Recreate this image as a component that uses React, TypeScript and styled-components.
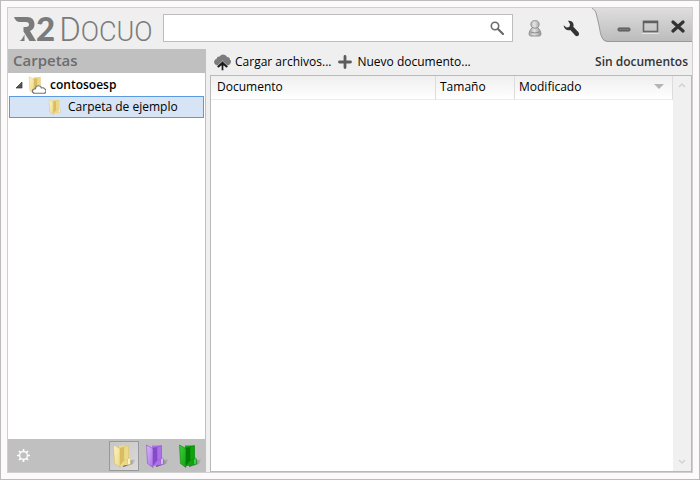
import React, { useState } from "react";
import styled, { createGlobalStyle } from "styled-components";

const GlobalStyle = createGlobalStyle`
  * { box-sizing: border-box; }
  body {
    margin: 0;
    font-family: "Open Sans", "Noto Sans", sans-serif;
    font-size: 12px;
    line-height: 16px;
    color: #000;
  }
  button, input { font: inherit; color: inherit; }
  button { border: 0; padding: 0; background: none; cursor: pointer; }
  svg { display: block; flex: none; }
`;

const Page = styled.div`
  min-height: 100vh;
  display: flex;
  padding: 6px;
  background: #fcfafb;
  border: 1px solid #bcbcbc;
`;

const Window = styled.div`
  flex: 1;
  min-width: 0;
  display: flex;
  flex-direction: column;
  background: #efefef;
  border: 1px solid #cfcfcf;
`;

const Header = styled.header`
  display: flex;
  align-items: flex-start;
  height: 41px;
`;

const Brand = styled.h1`
  display: flex;
  align-items: baseline;
  width: 155px;
  margin: 0;
  padding-left: 6px;
  flex: none;
  font-family: Roboto, sans-serif;
  line-height: 40px;
  white-space: nowrap;
  color: #7b7b7b;
`;

const Two = styled.span`
  font-family: Lato, sans-serif;
  font-size: 33px;
  font-weight: 900;
`;

const Initial = styled.span`
  margin-left: 4px;
  font-size: 33px;
  font-weight: 300;
`;

const SmallCaps = styled.span`
  font-size: 27px;
  font-weight: 300;
`;

const SearchBox = styled.label`
  flex: 1;
  min-width: 0;
  height: 28px;
  margin-top: 6px;
  padding-right: 8px;
  display: flex;
  align-items: center;
  background: #fff;
  border: 1px solid #bdbdbd;
`;

const SearchInput = styled.input`
  flex: 1;
  min-width: 0;
  height: 24px;
  padding: 0 6px;
  border: 0;
  outline: 0;
  background: transparent;
`;

const HeaderTools = styled.div`
  display: flex;
  align-items: center;
  gap: 18px;
  height: 40px;
  padding: 0 12px 0 13px;
`;

const IconButton = styled.button`
  display: flex;
  align-items: center;
  justify-content: center;
  width: 18px;
  height: 20px;
`;

const WindowControls = styled.div`
  display: flex;
  height: 34px;
`;

const ControlStrip = styled.div`
  display: flex;
  align-items: center;
  gap: 9px;
  padding: 3px 5px 0 4px;
  background: linear-gradient(#dedede, #bcbcbc);
  border-bottom: 1px solid #999;
`;

const Body = styled.div`
  flex: 1;
  min-height: 0;
  display: flex;
`;

const Sidebar = styled.aside`
  width: 198px;
  flex: none;
  display: flex;
  flex-direction: column;
  background: #fff;
  border-right: 1px solid #c0c0c0;
`;

const SidebarTitle = styled.h2`
  margin: 0;
  height: 24px;
  padding-left: 5px;
  font-size: 15px;
  line-height: 23px;
  font-weight: 600;
  color: #6c6c6c;
  background: #c0c0c0;
`;

const Tree = styled.ul`
  flex: 1;
  margin: 0;
  padding: 1px;
  list-style: none;
`;

const TreeRow = styled.button<{ $depth: number; $selected?: boolean }>`
  display: flex;
  align-items: center;
  gap: 4px;
  width: 100%;
  height: 22px;
  padding-left: ${(p) => (p.$depth ? 38 : 4)}px;
  text-align: left;
  font-weight: ${(p) => (p.$depth ? 400 : 600)};
  background: ${(p) => (p.$selected ? "#d7e4f6" : "transparent")};
  border: 1px solid ${(p) => (p.$selected ? "#5b9ae0" : "transparent")};
`;

const SidebarFooter = styled.footer`
  display: flex;
  align-items: center;
  justify-content: space-between;
  height: 33px;
  padding: 0 0 0 6px;
  background: #c0c0c0;
`;

const FolderTabs = styled.div`
  display: flex;
  gap: 3px;
`;

const FolderTab = styled.button<{ $active: boolean }>`
  display: flex;
  align-items: center;
  justify-content: center;
  width: 30px;
  height: 30px;
  background: ${(p) => (p.$active ? "linear-gradient(135deg, #c6c6c6, #dadada)" : "none")};
  border: 1px solid ${(p) => (p.$active ? "#989898" : "transparent")};
`;

const Main = styled.main`
  flex: 1;
  min-width: 0;
  display: flex;
  flex-direction: column;
  padding-left: 4px;
`;

const Toolbar = styled.div`
  display: flex;
  align-items: center;
  gap: 6px;
  height: 26px;
  padding: 0 4px;
`;

const Action = styled.button`
  display: flex;
  align-items: center;
  gap: 4px;
  height: 22px;
  white-space: nowrap;
`;

const Status = styled.span`
  margin-left: auto;
  font-weight: 600;
  color: #333;
  white-space: nowrap;
`;

const ListBox = styled.section`
  flex: 1;
  display: flex;
  background: #fff;
  border: 1px solid #b9b9b9;
`;

const ListArea = styled.div`
  flex: 1;
  min-width: 0;
`;

const Table = styled.table`
  width: 100%;
  table-layout: fixed;
  border-collapse: separate;
  border-spacing: 0;
`;

const HeadCell = styled.th<{ $width?: number }>`
  width: ${(p) => (p.$width ? `${p.$width}px` : "auto")};
  height: 24px;
  padding: 0 8px 2px 4px;
  text-align: left;
  font-weight: 400;
  background: linear-gradient(#efefef, #fff);
  border-bottom: 1px solid #ebebeb;
  border-right: 1px solid #dcdcdc;
  &:first-child { padding-left: 6px; }
`;

const HeadLabel = styled.span`
  display: flex;
  align-items: center;
  justify-content: space-between;
`;

const ScrollTrack = styled.div`
  width: 18px;
  display: flex;
  flex-direction: column;
  align-items: center;
  justify-content: space-between;
  background: #f0f0f0;
`;

const RMark = () => (
  <svg width="22" height="24" viewBox="0 0 22 24" fill="#7b7b7b" aria-hidden="true">
    <path d="M0 0h13c5 0 7.500 3 7.500 7.500 0 3.500-2 5.500-4.500 6.500L22 24h-6.500L9.500 14.500V10H12c2 0 3-1 3-2.500S14 5 12 5H6C3 5 1 3 0 0z" />
    <path d="M10.500 17.500V24H5.500c2.500-1 3.500-4 5-6.500z" />
  </svg>
);

const SearchIcon = () => (
  <svg width="14" height="14" viewBox="0 0 14 14" fill="none" stroke="#6a6a6a">
    <circle cx="5" cy="5" r="3.700" strokeWidth="1.600" />
    <path d="M8 8l5 5" strokeWidth="2.200" strokeLinecap="round" />
  </svg>
);

const PawnIcon = () => (
  <svg width="14" height="17" viewBox="0 0 14 17">
    <defs>
      <linearGradient id="pawn" x1="0" x2="1">
        <stop offset="0" stopColor="#a4a4a4" />
        <stop offset=".45" stopColor="#e4e4e4" />
        <stop offset="1" stopColor="#929292" />
      </linearGradient>
    </defs>
    <path
      d="M5 .8h4q2.200 1 2.200 3.500 0 2-1.500 3.200 2.800 2.500 3.300 6 0 2.500-2 2.500H3q-2 0-2-2.500.5-3.500 3.300-6Q2.800 6.300 2.800 4.300 2.800 1.800 5 .8z"
      fill="url(#pawn)"
      stroke="#919191"
    />
    <path d="M4 7.500q3 1.500 6 0M2.500 12q4.500 2 9 0" fill="none" stroke="#8b8b8b" />
  </svg>
);

const WrenchIcon = () => (
  <svg width="17" height="17" viewBox="0 0 17 17">
    <path
      d="M5 .8q3.500-.5 5 2 1 2 .3 4l5.200 5.400q1.200 2 0 3.300-1.300 1.200-3 .2L7.300 10Q4.500 10.800 2.300 9 .6 7.500.6 5.300L3.500 7.500l2.800-.6.8-2.700z"
      fill="#333"
    />
  </svg>
);

const TabEdge = () => (
  <svg width="19" height="34" viewBox="0 0 19 34">
    <defs>
      <linearGradient id="edge" x1="0" y1="0" x2="0" y2="1">
        <stop offset="0" stopColor="#dedede" />
        <stop offset="1" stopColor="#bcbcbc" />
      </linearGradient>
    </defs>
    <path d="M0 0h19v34h-3C8 34 9 25 6 13 4 5 4 2 0 0z" fill="url(#edge)" />
    <path d="M0 .5C4 2 4 5 6 13c3 12 2 20.500 11 20.500h2" fill="none" stroke="#999" />
  </svg>
);

const MinimizeIcon = () => (
  <svg width="14" height="16" viewBox="0 0 14 16">
    <rect x="1" y="10" width="12" height="3" rx="1" fill="#777" stroke="#555" />
  </svg>
);

const MaximizeIcon = () => (
  <svg width="18" height="16" viewBox="0 0 18 16" fill="none">
    <rect x="1.500" y="3.500" width="14" height="10" stroke="#666" strokeWidth="1.600" />
    <path d="M1 4h15" stroke="#606060" strokeWidth="2.500" />
    <path d="M0 15.500h17" stroke="#e4e4e4" />
  </svg>
);

const CloseIcon = () => (
  <svg width="14" height="16" viewBox="0 0 14 16">
    <path d="M2 4l10 9M12 4L2 13" stroke="#333" strokeWidth="3.200" strokeLinecap="round" />
  </svg>
);

const CloudUpIcon = () => (
  <svg width="17" height="17" viewBox="0 0 17 17">
    <path
      d="M3 11Q.5 10.500.5 8T3 5Q3 2.500 5.500 3 7 .5 9.500 1q2.500 0 3.500 2.500 2.500-.5 2.500 2 1.500 1 1 3-1 2.500-3 2.500z"
      fill="#7c7c7c"
      stroke="#6c6c6c"
      strokeWidth=".7"
    />
    <path
      d="M8.500 7L2.800 12.300l1.700 1.700L7.300 11.800V16.500h2.400v-4.700L12.500 14l1.700-1.700z"
      fill="#1b1b1b"
      stroke="#efefef"
      strokeWidth=".6"
    />
  </svg>
);

const PlusIcon = () => (
  <svg width="16" height="16" viewBox="0 0 16 16">
    <path d="M8 2.500v11M2.500 8h11" stroke="#5c5c5c" strokeWidth="2.800" strokeLinecap="round" />
  </svg>
);

const GearIcon = () => (
  <svg width="15" height="15" viewBox="0 0 15 15" fill="none" stroke="#fff">
    <circle cx="7.500" cy="7.500" r="3.900" strokeWidth="1.300" />
    <path
      d="M7.500 1v2.500M7.500 11.500V14M1 7.500h2.500M11.500 7.500H14M3 3l1.700 1.700M10.300 10.300L12 12M3 12l1.700-1.700M10.300 4.700L12 3"
      strokeWidth="1.700"
    />
  </svg>
);

const Expander = () => (
  <svg width="10" height="10" viewBox="0 0 10 10">
    <path d="M8 2v6H2z" fill="#555" stroke="#333" strokeWidth=".7" />
  </svg>
);

type Tone = { light: string; mid: string; dark: string };

const tones: Record<string, Tone> = {
  amarillo: { light: "#fdf3c4", mid: "#eed98a", dark: "#d3b558" },
  morado: { light: "#d9b8fa", mid: "#ac70ea", dark: "#7d42bd" },
  verde: { light: "#3fd03f", mid: "#0ca50c", dark: "#057005" },
};

const FolderArt = ({ name, size, cloud }: { name: string; size: number; cloud?: boolean }) => {
  const t = tones[name];
  const id = `${name}-${size}`;
  return (
    <svg width={size} height={size} viewBox="0 0 24 24">
      <defs>
        <linearGradient id={id} x1="0" x2="1" y1="0" y2="1">
          <stop offset="0" stopColor={t.light} />
          <stop offset="1" stopColor={t.mid} />
        </linearGradient>
        <linearGradient id={`${id}-shade`} x1="0" x2="1">
          <stop offset="0" stopColor="#333" stopOpacity=".8" />
          <stop offset="1" stopColor="#333" stopOpacity="0" />
        </linearGradient>
      </defs>
      {size > 20 && <path d="M12 18l12-3-3 5-10 3z" fill={`url(#${id}-shade)`} />}
      <path d="M7 1.500h9.500v19L8 22z" fill={t.mid} />
      <path d="M7 4l5-1v14l-4.500 5z" fill={t.dark} opacity=".8" />
      <path d="M12 3l4.500-1.500V15L12 17z" fill={t.mid} stroke={t.dark} strokeWidth=".4" />
      <path d="M1.500 1L8 4.500V23.500L2.500 19.500z" fill={`url(#${id})`} stroke={t.dark} strokeWidth=".5" />
      <path d="M8 22l4-5 4.500-1.500v5z" fill={t.mid} />
      <path d="M15.500 15q2-2 3 0v5l-3 1z" fill={t.light} stroke={t.dark} strokeWidth=".5" />
      {cloud && (
        <path
          d="M9 23q-3 0-3-3t4-3q0-4 4-4 3 0 4 3 3-1 4 1 2 1 2 3 0 3-3 3z"
          fill="#fff"
          stroke="#747474"
          strokeWidth="1.500"
        />
      )}
    </svg>
  );
};

const Chevron = ({ down }: { down?: boolean }) => (
  <svg width="10" height="8" viewBox="0 0 10 8" fill="none" stroke="#d2d2d2" strokeWidth="1.500">
    <path d={down ? "M2 3l3 3 3-3" : "M2 5l3-3 3 3"} />
  </svg>
);

const SortArrow = () => (
  <svg width="10" height="6" viewBox="0 0 10 6">
    <path d="M0 0h10L5 5z" fill="#b5b5b5" />
  </svg>
);

export default function App() {
  const [folderTab, setFolderTab] = useState("amarillo");
  return (
    <>
      <GlobalStyle />
      <Page>
        <Window>
          <Header>
            <Brand>
              <RMark />
              <Two>2</Two>
              <Initial>D</Initial>
              <SmallCaps>OCUO</SmallCaps>
            </Brand>
            <SearchBox>
              <SearchInput type="search" aria-label="Buscar" />
              <SearchIcon />
            </SearchBox>
            <HeaderTools>
              <IconButton aria-label="Usuario"><PawnIcon /></IconButton>
              <IconButton aria-label="Herramientas"><WrenchIcon /></IconButton>
            </HeaderTools>
            <WindowControls>
              <TabEdge />
              <ControlStrip>
                <IconButton aria-label="Minimizar"><MinimizeIcon /></IconButton>
                <IconButton aria-label="Maximizar"><MaximizeIcon /></IconButton>
                <IconButton aria-label="Cerrar"><CloseIcon /></IconButton>
              </ControlStrip>
            </WindowControls>
          </Header>
          <Body>
            <Sidebar>
              <SidebarTitle>Carpetas</SidebarTitle>
              <Tree>
                <li>
                  <TreeRow $depth={0} aria-expanded="true">
                    <Expander />
                    <FolderArt name="amarillo" size={18} cloud />
                    contosoesp
                  </TreeRow>
                </li>
                <li>
                  <TreeRow $depth={1} $selected>
                    <FolderArt name="amarillo" size={16} />
                    Carpeta de ejemplo
                  </TreeRow>
                </li>
              </Tree>
              <SidebarFooter>
                <IconButton aria-label="Configuración"><GearIcon /></IconButton>
                <FolderTabs>
                  {Object.keys(tones).map((name) => (
                    <FolderTab
                      key={name}
                      $active={folderTab === name}
                      aria-label={`Carpetas en ${name}`}
                      aria-pressed={folderTab === name}
                      onClick={() => setFolderTab(name)}
                    >
                      <FolderArt name={name} size={24} />
                    </FolderTab>
                  ))}
                </FolderTabs>
              </SidebarFooter>
            </Sidebar>
            <Main>
              <Toolbar>
                <Action><CloudUpIcon />Cargar archivos...</Action>
                <Action><PlusIcon />Nuevo documento...</Action>
                <Status>Sin documentos</Status>
              </Toolbar>
              <ListBox>
                <ListArea>
                  <Table>
                    <thead>
                      <tr>
                        <HeadCell scope="col">Documento</HeadCell>
                        <HeadCell scope="col" $width={79}>Tamaño</HeadCell>
                        <HeadCell scope="col" $width={158}>
                          <HeadLabel>Modificado<SortArrow /></HeadLabel>
                        </HeadCell>
                      </tr>
                    </thead>
                  </Table>
                </ListArea>
                <ScrollTrack>
                  <IconButton aria-label="Subir"><Chevron /></IconButton>
                  <IconButton aria-label="Bajar"><Chevron down /></IconButton>
                </ScrollTrack>
              </ListBox>
            </Main>
          </Body>
        </Window>
      </Page>
    </>
  );
}
